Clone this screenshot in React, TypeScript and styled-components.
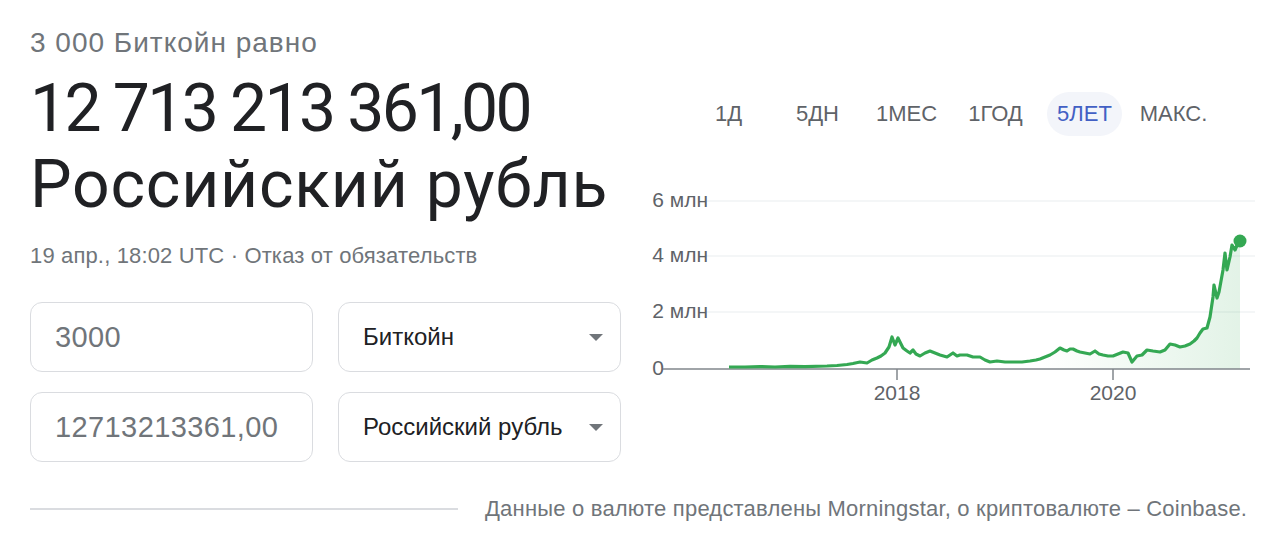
import React from 'react';
import styled, {createGlobalStyle} from 'styled-components';

const GlobalStyle = createGlobalStyle`
  body {
    margin: 0;
    background: #fff;
    font-family: "Liberation Sans", Arial, sans-serif;
  }
`;

const tabs = ['1Д', '5ДН', '1МЕС', '1ГОД', '5ЛЕТ', 'МАКС.'];

// chart points taken from the picture (page coords)
const points: [number, number][] = [
  [729, 367], [745, 367], [760, 366.6], [775, 367], [790, 366.4], [805, 366.6], [827, 366],
  [837, 365.5], [847, 364.5], [853, 363.5], [860, 362], [867, 363], [872, 360], [877, 358],
  [881, 356], [885, 353], [889, 347], [892, 337], [895, 345], [898, 338], [903, 348],
  [907, 351], [910, 353], [913, 350], [916, 354], [920, 356], [925, 353], [930, 351],
  [935, 353], [940, 355], [947, 357], [953, 353], [957, 356], [960, 355], [967, 355],
  [973, 357], [980, 357], [985, 360], [990, 362], [997, 361], [1005, 362], [1013, 362],
  [1022, 362], [1030, 361], [1036, 360], [1040, 359], [1045, 357], [1050, 355], [1055, 352],
  [1060, 348], [1064, 350], [1067, 351], [1070, 349], [1073, 349], [1077, 351], [1080, 352],
  [1085, 353], [1090, 354], [1095, 351], [1099, 354], [1103, 355], [1108, 356], [1113, 356],
  [1118, 354], [1123, 352], [1128, 353], [1132, 362], [1137, 356], [1142, 355], [1147, 350],
  [1153, 351], [1160, 352], [1165, 350], [1170, 344], [1175, 345], [1180, 347], [1185, 346],
  [1190, 344], [1194, 341], [1197, 338], [1200, 333], [1203, 329], [1207, 328], [1210, 317],
  [1213, 297], [1214, 285], [1217, 298], [1219, 292], [1221, 281], [1223, 270], [1225, 253],
  [1227, 270], [1230, 257], [1232, 245], [1235, 250], [1238, 243], [1240, 241],
];

const OX = 640;
const OY = 185;
const linePath = points.map(([x, y], i) => `${i ? 'L' : 'M'}${x - OX} ${y - OY}`).join(' ');
const areaPath = `${linePath} L${1240 - OX} ${369 - OY} L${729 - OX} ${369 - OY} Z`;

const yTicks = [
  {label: '6 млн', y: 201},
  {label: '4 млн', y: 256},
  {label: '2 млн', y: 312},
];

const Chart = () => (
  <ChartSvg width={620} height={232} viewBox="0 0 620 232">
    <defs>
      <linearGradient id="area" x1="400" y1="0" x2="600" y2="0" gradientUnits="userSpaceOnUse">
        <stop offset="0" stopColor="#34a853" stopOpacity="0"/>
        <stop offset="1" stopColor="#34a853" stopOpacity="0.14"/>
      </linearGradient>
    </defs>
    {yTicks.map(t => (
      <g key={t.label}>
        <line x1={58} x2={615} y1={t.y - OY} y2={t.y - OY} stroke="#f1f3f4" strokeWidth={1.5}/>
        <text x={68} y={t.y - OY} textAnchor="end" dominantBaseline="middle">{t.label}</text>
      </g>
    ))}
    <text x={24} y={369 - OY} textAnchor="end" dominantBaseline="middle">0</text>
    <path d={areaPath} fill="url(#area)"/>
    <line x1={23} x2={610} y1={369 - OY} y2={369 - OY} stroke="#80868b" strokeWidth={1.5}/>
    <line x1={257} x2={257} y1={369 - OY} y2={380 - OY} stroke="#80868b" strokeWidth={1.5}/>
    <line x1={473} x2={473} y1={369 - OY} y2={380 - OY} stroke="#80868b" strokeWidth={1.5}/>
    <text x={257} y={394 - OY} textAnchor="middle" dominantBaseline="middle">2018</text>
    <text x={473} y={394 - OY} textAnchor="middle" dominantBaseline="middle">2020</text>
    <path d={linePath} fill="none" stroke="#34a853" strokeWidth={3.2} strokeLinejoin="round"/>
    <circle cx={1240 - OX} cy={241 - OY} r={6.5} fill="#34a853"/>
  </ChartSvg>
);

const Caret = () => (
  <CaretSvg width={14} height={7} viewBox="0 0 14 7">
    <path d="M0 0h14L7 7z" fill="#70757a"/>
  </CaretSvg>
);

export default function App() {
  return (
    <Page>
      <GlobalStyle/>
      <Top>
        <LeftCol>
          <Subtitle>3 000 Биткойн равно</Subtitle>
          <BigNumber>12 713 213 361,00</BigNumber>
          <BigCurrency>Российский рубль</BigCurrency>
          <DateLine>19 апр., 18:02 UTC · Отказ от обязательств</DateLine>
          <Converter>
            <Field><AmountText>3000</AmountText></Field>
            <Field>
              <UnitText>Биткойн</UnitText>
              <Caret/>
            </Field>
            <Field><AmountText>12713213361,00</AmountText></Field>
            <Field>
              <UnitText>Российский рубль</UnitText>
              <Caret/>
            </Field>
          </Converter>
        </LeftCol>
        <RightCol>
          <Tabs>
            {tabs.map(t => (
              <Tab key={t} $active={t === '5ЛЕТ'}>{t}</Tab>
            ))}
          </Tabs>
          <Chart/>
        </RightCol>
      </Top>
      <Footer>
        <Rule/>
        <Source>Данные о валюте представлены Morningstar, о криптовалюте – Coinbase.</Source>
      </Footer>
    </Page>
  );
}

const Page = styled.div`
  width: 1280px;
  height: 549px;
  box-sizing: border-box;
  padding: 0 31px 0 30px;
  overflow: hidden;
`;

const Top = styled.div`
  display: flex;
  align-items: flex-start;
`;

const LeftCol = styled.div`
  width: 591px;
  display: flex;
  flex-direction: column;
`;

const Subtitle = styled.div`
  margin-top: 27px;
  font-size: 28px;
  line-height: 31px;
  letter-spacing: 1px;
  color: #70757a;
`;

const BigNumber = styled.div`
  margin-top: 13px;
  font-family: Roboto, "Open Sans", sans-serif;
  font-size: 66px;
  line-height: 76px;
  letter-spacing: -2.6px;
  color: #202124;
  white-space: nowrap;
`;

const BigCurrency = styled(BigNumber)`
  margin-top: 0;
  letter-spacing: 0.8px;
`;

const DateLine = styled.div`
  margin-top: 20px;
  font-size: 22px;
  line-height: 25px;
  letter-spacing: 0.15px;
  color: #70757a;
`;

const Converter = styled.div`
  margin-top: 34px;
  display: grid;
  grid-template-columns: 283px 283px;
  column-gap: 25px;
  row-gap: 20px;
`;

const Field = styled.div`
  height: 70px;
  box-sizing: border-box;
  border: 1px solid #dadce0;
  border-radius: 12px;
  display: flex;
  align-items: center;
  justify-content: space-between;
  padding: 0 17px 0 24px;
`;

const AmountText = styled.span`
  font-size: 29px;
  letter-spacing: 0.4px;
  color: #70757a;
`;

const UnitText = styled.span`
  font-size: 24px;
  color: #202124;
`;

const CaretSvg = styled.svg`
  display: block;
  flex-shrink: 0;
`;

const RightCol = styled.div`
  flex: 1;
  margin-left: 19px;
  display: flex;
  flex-direction: column;
`;

const Tabs = styled.div`
  margin-top: 92px;
  margin-left: 44px;
  display: grid;
  grid-template-columns: repeat(6, 89px);
`;

const Tab = styled.div<{ $active?: boolean }>`
  justify-self: center;
  height: 44px;
  padding: 0 10px;
  border-radius: 22px;
  display: flex;
  align-items: center;
  font-size: 22px;
  color: ${p => (p.$active ? '#4260c4' : '#5f6368')};
  background: ${p => (p.$active ? '#f3f5fa' : 'transparent')};
`;

const ChartSvg = styled.svg`
  display: block;
  margin-top: 49px;
  font-family: "Liberation Sans", Arial, sans-serif;
  font-size: 21px;
  fill: #5f6368;
`;

const Footer = styled.div`
  margin-top: 34px;
  display: flex;
  align-items: center;
  gap: 27px;
`;

const Rule = styled.div`
  width: 428px;
  height: 2px;
  background: #dadce0;
`;

const Source = styled.div`
  font-size: 22px;
  letter-spacing: 0.2px;
  color: #70757a;
  white-space: nowrap;
`;
